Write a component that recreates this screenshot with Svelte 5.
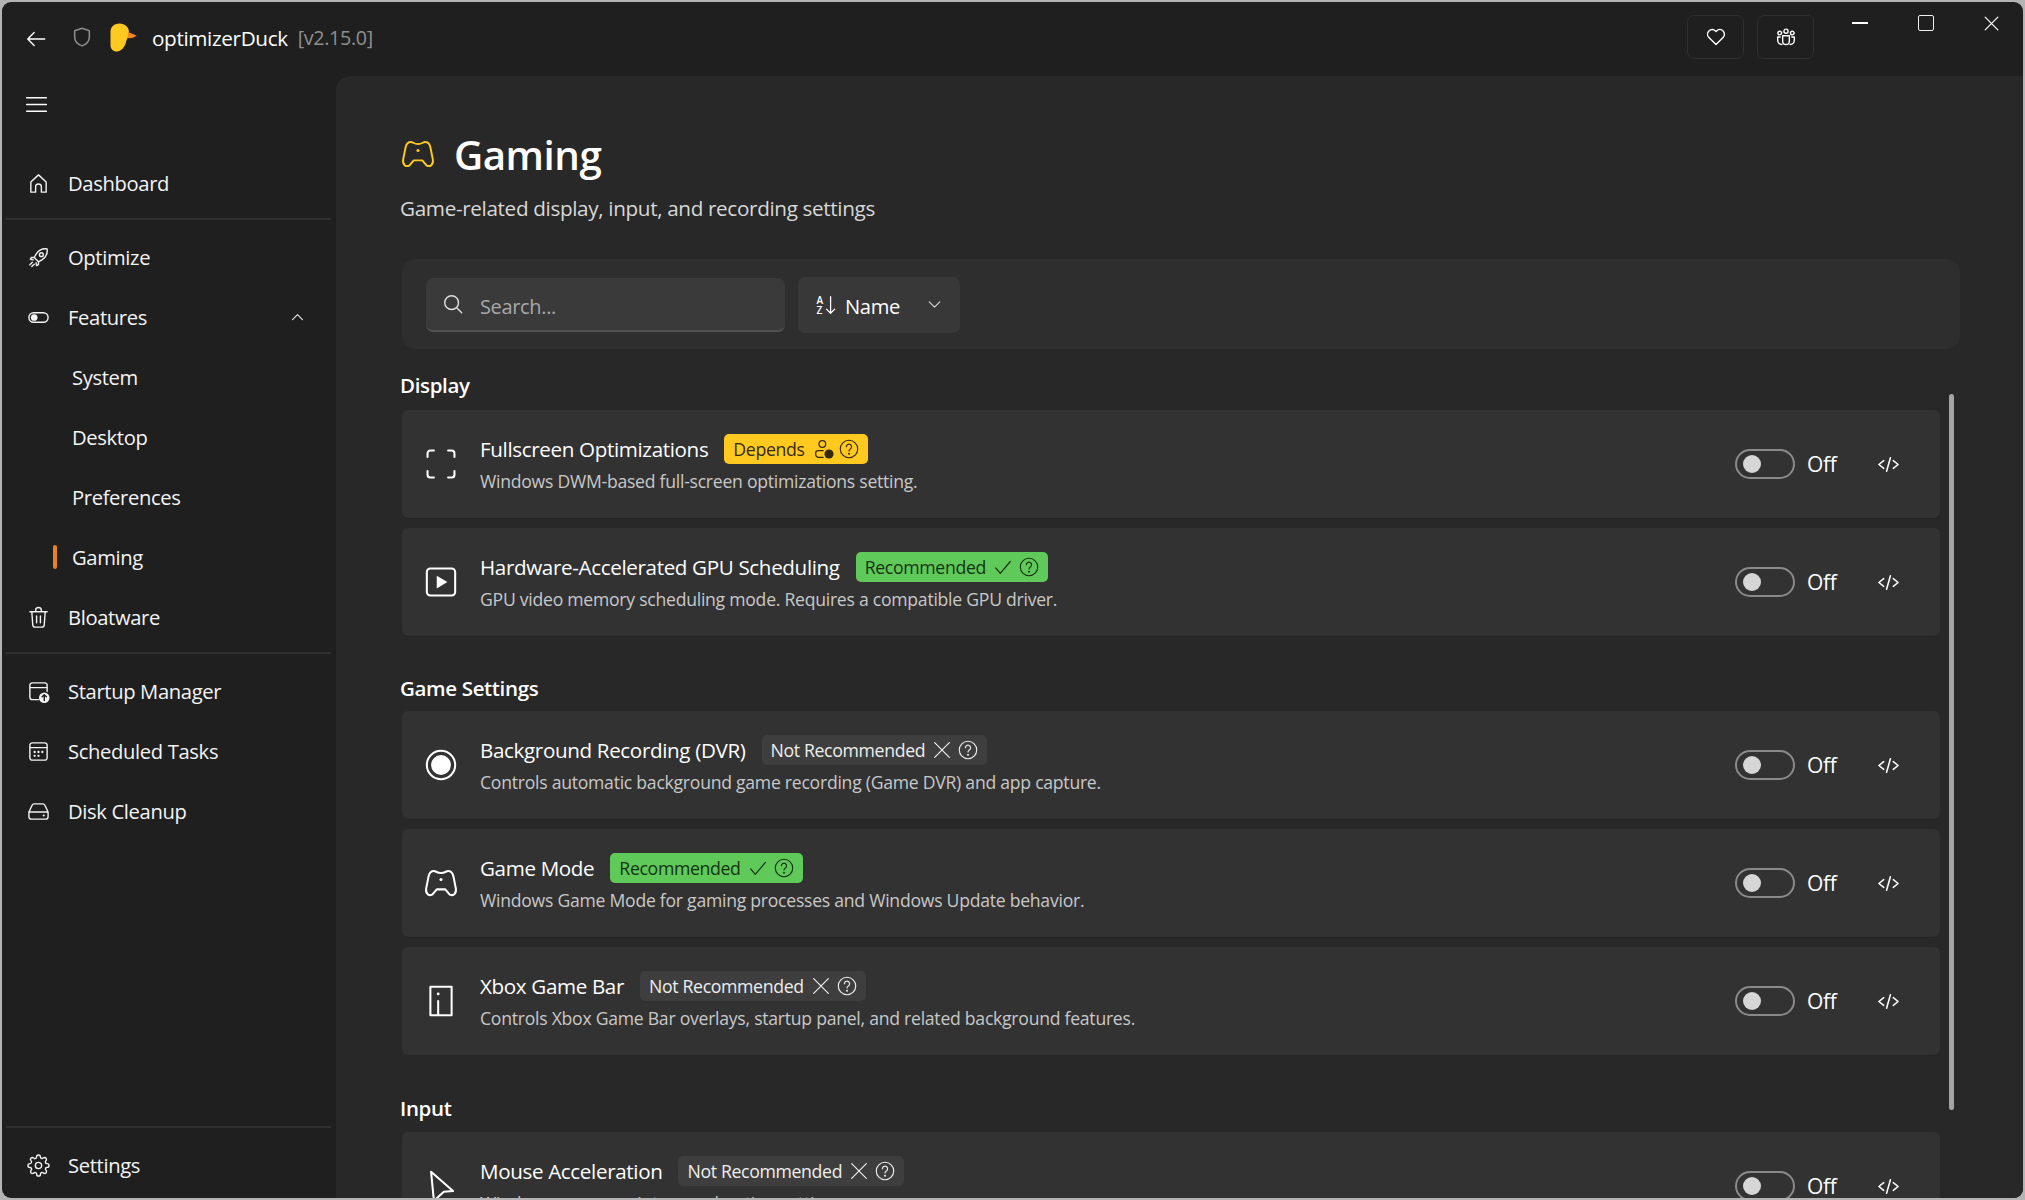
<script>
	const icons = {
		back: 'M21.500 12H3M10 5l-7 7 7 7',
		shield: 'M12 2.500l8 2.600v6.900c0 5-3.400 8-8 9.700-4.600-1.700-8-4.700-8-9.700V5.100z',
		menu: 'M2.500 5.500h19M2.500 12h19M2.500 18.500h19',
		home: 'M4 21V10.500L12 3l8 7.500V21h-5v-5.500a3 3 0 0 0-6 0V21z',
		rocket: 'M21 3c-5-.6-9 1.400-11.500 5.500L7.500 12l4.500 4.500 3.500-2C19.600 12 21.600 8 21 3zM15 7a2 2 0 1 1 0 4 2 2 0 0 1 0-4zM7.500 12H4.500l-1 2 3 .5M12 16.500V19.500l-2 1-.5-3M5.500 17L3 19.500M7.500 19L5 21.500',
		toggle: 'M7 7h10a5 5 0 0 1 0 10H7A5 5 0 0 1 7 7z',
		trash: 'M3 6h18M9 6V4.500A2.500 2.500 0 0 1 15 4.500V6M5 6l1 13.500A2.500 2.500 0 0 0 8.500 22h7a2.500 2.500 0 0 0 2.500-2.500L19 6M10 10.500v7M14 10.500v7',
		startup: 'M12 20.500H5.500A2.500 2.500 0 0 1 3 18V5.500A2.500 2.500 0 0 1 5.500 3h13A2.500 2.500 0 0 1 21 5.500V12M3 8h18',
		calendar: 'M5.500 3h13A2.500 2.500 0 0 1 21 5.500v13a2.500 2.500 0 0 1-2.500 2.500h-13A2.500 2.500 0 0 1 3 18.500v-13A2.500 2.500 0 0 1 5.500 3zM3 8h18',
		disk: 'M7.500 4h9c1 0 1.800.6 2.200 1.500L22 12.500v5a2.500 2.500 0 0 1-2.500 2.500h-15A2.500 2.500 0 0 1 2 17.500v-5l3.300-7C5.700 4.600 6.500 4 7.500 4zM2 12.500h20',
		gear: 'M19.400 15a1.650 1.650 0 0 0 .33 1.820l.06.06a2 2 0 1 1-2.830 2.830l-.06-.06a1.650 1.650 0 0 0-1.820-.33 1.650 1.650 0 0 0-1 1.510V21a2 2 0 1 1-4 0v-.09A1.650 1.650 0 0 0 9 19.400a1.650 1.650 0 0 0-1.820.33l-.06.06a2 2 0 1 1-2.830-2.830l.06-.06a1.650 1.650 0 0 0 .33-1.820 1.650 1.650 0 0 0-1.510-1H3a2 2 0 1 1 0-4h.09A1.650 1.650 0 0 0 4.600 9a1.650 1.650 0 0 0-.33-1.820l-.06-.06a2 2 0 1 1 2.830-2.830l.06.06a1.650 1.650 0 0 0 1.820.33H9a1.650 1.650 0 0 0 1-1.510V3a2 2 0 1 1 4 0v.09a1.650 1.650 0 0 0 1 1.510 1.650 1.650 0 0 0 1.820-.33l.06-.06a2 2 0 1 1 2.830 2.830l-.06.06a1.650 1.650 0 0 0-.33 1.820V9a1.650 1.650 0 0 0 1.510 1H21a2 2 0 1 1 0 4h-.09a1.650 1.650 0 0 0-1.510 1zM12 8.700a3.300 3.300 0 1 1 0 6.600 3.300 3.300 0 0 1 0-6.600z',
		gamepad: 'M7 3.500C5 3.500 3.800 5 3.300 7L1.500 16C1 19.500 3.500 21.500 6 20L9 16.500H15L18 20C20.500 21.500 23 19.500 22.500 16L20.700 7C20.200 5 19 3.500 17 3.500C15.500 3.500 15 5 12 5C9 5 8.500 3.500 7 3.500z',
		corners: 'M2.500 7V4.500a2 2 0 0 1 2-2H7M17 2.500h2.500a2 2 0 0 1 2 2V7M21.500 17v2.500a2 2 0 0 1-2 2H17M7 21.500H4.500a2 2 0 0 1-2-2V17',
		play: 'M4.500 2.500h15a2.500 2.500 0 0 1 2.500 2.500v14a2.500 2.500 0 0 1-2.500 2.500h-15A2.500 2.500 0 0 1 2 19V5a2.500 2.500 0 0 1 2.500-2.500z',
		circle: 'M12 2a10 10 0 1 1 0 20 10 10 0 0 1 0-20z',
		xbar: 'M4.500 2h15v20h-15zM10 22V12',
		cursor: 'M5 2L20.500 15.500L14 16L7 22.500z',
		chevUp: 'M5 15l7-7 7 7',
		chevDown: 'M6 9l6 6 6-6',
		search: 'M10.500 3a7.500 7.500 0 1 1 0 15 7.500 7.500 0 0 1 0-15zM16 16l5.500 5.500',
		code: 'M7 8l-5 4 5 4M17 8l5 4-5 4M14 5l-4 14',
		heart: 'M12 21L3.500 12.500a5.500 5.500 0 0 1 7.800-7.800l.7.7.7-.7a5.500 5.500 0 0 1 7.800 7.800z',
		team: 'M12 2.500a2.500 2.500 0 1 1 0 5 2.500 2.500 0 0 1 0-5zM4.500 5a2.200 2.200 0 1 1 0 4.400 2.200 2.200 0 0 1 0-4.400zM19.500 5a2.200 2.200 0 1 1 0 4.400 2.200 2.200 0 0 1 0-4.400zM8 10.500h8V17a4 4 0 0 1-8 0zM5 12H2v4a5 5 0 0 0 5 5M19 12h3v4a5 5 0 0 1-5 5',
		x: 'M4 4l16 16M20 4L4 20',
		check: 'M4 13l5 6L20 6',
		help: 'M12 2.500a9.500 9.500 0 1 1 0 19 9.500 9.500 0 0 1 0-19zM9.200 9.500a2.800 2.800 0 1 1 4.300 2.400c-.9.6-1.500 1.100-1.500 2.300'
	};

	const nav = [
		{ label: 'Dashboard', icon: 'home', divider: true },
		{ label: 'Optimize', icon: 'rocket' },
		{ label: 'Features', icon: 'toggle', open: true },
		{ label: 'System', sub: true },
		{ label: 'Desktop', sub: true },
		{ label: 'Preferences', sub: true },
		{ label: 'Gaming', sub: true, active: true },
		{ label: 'Bloatware', icon: 'trash', divider: true },
		{ label: 'Startup Manager', icon: 'startup' },
		{ label: 'Scheduled Tasks', icon: 'calendar' },
		{ label: 'Disk Cleanup', icon: 'disk' }
	];

	const sections = [
		{
			title: 'Display',
			rows: [
				{ name: 'Fullscreen Optimizations', desc: 'Windows DWM-based full-screen optimizations setting.', icon: 'corners', badge: 'Depends', kind: 'depends' },
				{ name: 'Hardware-Accelerated GPU Scheduling', desc: 'GPU video memory scheduling mode. Requires a compatible GPU driver.', icon: 'play', badge: 'Recommended', kind: 'good' }
			]
		},
		{
			title: 'Game Settings',
			rows: [
				{ name: 'Background Recording (DVR)', desc: 'Controls automatic background game recording (Game DVR) and app capture.', icon: 'circle', badge: 'Not Recommended', kind: 'bad' },
				{ name: 'Game Mode', desc: 'Windows Game Mode for gaming processes and Windows Update behavior.', icon: 'gamepad', badge: 'Recommended', kind: 'good' },
				{ name: 'Xbox Game Bar', desc: 'Controls Xbox Game Bar overlays, startup panel, and related background features.', icon: 'xbar', badge: 'Not Recommended', kind: 'bad' }
			]
		},
		{
			title: 'Input',
			rows: [
				{ name: 'Mouse Acceleration', desc: 'Windows mouse pointer acceleration setting.', icon: 'cursor', badge: 'Not Recommended', kind: 'bad' }
			]
		}
	];
</script>

{#snippet icon(name, cls = '')}
	<svg class="ic {cls}" viewBox="0 0 24 24" aria-hidden="true">
		<path d={icons[name]} />
		{#if name === 'toggle'}<circle class="dot" cx="7.500" cy="12" r="3.500" />{/if}
		{#if name === 'startup'}<circle class="dot" cx="18" cy="18.500" r="5.500" /><path class="cut" d="M18 21.500v-6M15.800 17.500l2.200-2.200 2.200 2.200" />{/if}
		{#if name === 'calendar'}
			<circle class="dot" cx="8" cy="12.500" r="1.200" /><circle class="dot" cx="12" cy="12.500" r="1.200" /><circle class="dot" cx="16" cy="12.500" r="1.200" />
			<circle class="dot" cx="8" cy="16.500" r="1.200" /><circle class="dot" cx="12" cy="16.500" r="1.200" />
		{/if}
		{#if name === 'disk'}<circle class="dot" cx="17.500" cy="16.200" r="1.100" />{/if}
		{#if name === 'gamepad'}<circle class="dot" cx="12" cy="9.500" r="1.100" />{/if}
		{#if name === 'play'}<path class="dot" d="M9 7.500v9l7.500-4.500z" />{/if}
		{#if name === 'circle'}<circle class="dot" cx="12" cy="12" r="7" />{/if}
		{#if name === 'xbar'}<circle class="dot" cx="10" cy="7" r="1" />{/if}
		{#if name === 'help'}<circle class="dot" cx="12" cy="17.300" r="1.100" />{/if}
	</svg>
{/snippet}

<div class="window">
	<header class="titlebar">
		{@render icon('back', 'back')}
		{@render icon('shield', 'shield')}
		<svg class="duck" viewBox="0 0 28 30" aria-hidden="true">
			<path fill="#ffc91f" d="M10.500 .5C16 .5 20 4 20 9.500C20 14 17.500 16 17 19C16 24 12 28.500 8 28.500C4 28.500 1.500 26 1.500 22V9C1.500 4 5 .5 10.500 .5z" />
			<path fill="#f08a1d" d="M19 9L27.500 12.500C26 14.500 22 15.500 18.500 15z" />
		</svg>
		<span class="appname">optimizerDuck</span>
		<span class="version">[v2.15.0]</span>
		<div class="spacer"></div>
		<button class="tbtn">{@render icon('heart')}</button>
		<button class="tbtn">{@render icon('team')}</button>
		<div class="winctl">
			<span class="min"></span>
			<span class="max"></span>
			{@render icon('x', 'close')}
		</div>
	</header>

	<div class="body">
		<aside class="sidebar">
			<div class="menu">{@render icon('menu')}</div>
			<nav class="nav">
				{#each nav as item}
					<div class="item" class:sub={item.sub} class:active={item.active}>
						{#if item.icon}{@render icon(item.icon)}{/if}
						<span>{item.label}</span>
						{#if item.open}{@render icon('chevUp', 'chev')}{/if}
					</div>
					{#if item.divider}<div class="divider"></div>{/if}
				{/each}
			</nav>
			<div class="bottom">
				<div class="divider"></div>
				<div class="item">{@render icon('gear')}<span>Settings</span></div>
			</div>
		</aside>

		<main class="main">
			<div class="pagehead">
				{@render icon('gamepad', 'pageicon')}
				<h1>Gaming</h1>
			</div>
			<p class="subtitle">Game-related display, input, and recording settings</p>

			<div class="toolbar">
				<div class="search">
					{@render icon('search')}
					<span>Search...</span>
				</div>
				<div class="sort">
					<svg class="ic sorticon" viewBox="0 0 24 24" aria-hidden="true">
						<text x="1.500" y="10.500" font-size="11">A</text>
						<text x="1.500" y="22" font-size="11">Z</text>
						<path d="M17 3v18M12.500 16.500L17 21l4.500-4.500" />
					</svg>
					<span class="sortname">Name</span>
					{@render icon('chevDown', 'sortchev')}
				</div>
			</div>

			{#each sections as section}
				<section class="section">
					<h2>{section.title}</h2>
					<div class="rows">
						{#each section.rows as row}
							<div class="card">
								{@render icon(row.icon, 'rowicon')}
								<div class="info">
									<div class="nameline">
										<span class="name">{row.name}</span>
										<span class="badge {row.kind}">
											<span>{row.badge}</span>
											{#if row.kind === 'depends'}
												<svg class="ic person" viewBox="0 0 24 24" aria-hidden="true">
													<circle cx="10" cy="6" r="4" />
													<path d="M11 22H6a4 4 0 0 1-4-4v-1a3 3 0 0 1 3-3h6" />
													<circle class="dot" cx="18" cy="18" r="5.500" />
												</svg>
											{:else if row.kind === 'good'}
												{@render icon('check', 'mark')}
											{:else}
												{@render icon('x', 'mark')}
											{/if}
											{@render icon('help', 'helpicon')}
										</span>
									</div>
									<div class="desc">{row.desc}</div>
								</div>
								<div class="switch"><span class="thumb"></span></div>
								<span class="off">Off</span>
								{@render icon('code', 'codeicon')}
							</div>
						{/each}
					</div>
				</section>
			{/each}
			<div class="scrollbar"></div>
		</main>
	</div>
</div>

<style>
	:global(body) {
		margin: 0;
		background: #b4b4b4;
		font-family: "Open Sans", "Noto Sans", sans-serif;
		color: #fff;
	}

	.window {
		width: 2021px;
		height: 1196px;
		margin: 2px;
		border-radius: 9px;
		background: #1f1f1f;
		overflow: hidden;
		display: flex;
		flex-direction: column;
		letter-spacing: -0.35px;
	}

	.ic {
		width: 20px;
		height: 20px;
		flex: none;
		fill: none;
		stroke: currentColor;
		stroke-width: 1.700;
		stroke-linecap: round;
		stroke-linejoin: round;
	}
	.ic .dot {
		fill: currentColor;
		stroke: none;
	}
	.ic .cut {
		stroke: #1f1f1f;
		stroke-width: 1.500;
	}

	/* title bar */
	.titlebar {
		height: 74px;
		flex: none;
		display: flex;
		align-items: center;
		padding-left: 23px;
		position: relative;
	}
	.back {
		width: 22px;
		height: 22px;
		stroke-width: 1.500;
	}
	.shield {
		width: 22px;
		height: 22px;
		margin-left: 24px;
		margin-top: -4px;
		color: #8c8c8c;
	}
	.duck {
		width: 28px;
		height: 30px;
		margin-left: 16px;
		margin-top: -2px;
	}
	.appname {
		margin-left: 15px;
		margin-top: -3px;
		font-size: 20.700px;
	}
	.version {
		margin-left: 10px;
		margin-top: -3px;
		font-size: 19.700px;
		color: #8f8f8f;
	}
	.spacer {
		flex: 1;
	}
	.tbtn {
		width: 57px;
		height: 44px;
		margin-top: -4px;
		margin-right: 13px;
		padding: 0;
		border: 1.500px solid #303030;
		border-radius: 7px;
		background: #1f1f1f;
		color: #fff;
		display: flex;
		align-items: center;
		justify-content: center;
	}
	.winctl {
		display: flex;
		align-items: center;
		width: 196px;
		height: 18px;
		margin-top: -32px;
		padding-left: 25px;
		box-sizing: border-box;
	}
	.min {
		width: 16px;
		height: 2px;
		background: #fff;
	}
	.max {
		width: 14px;
		height: 14px;
		margin-left: 50px;
		border: 1.500px solid #f0f0f0;
		border-radius: 2px;
	}
	.close {
		width: 19px;
		height: 19px;
		margin-left: 48px;
		stroke-width: 1.500;
	}

	/* sidebar */
	.body {
		flex: 1;
		display: flex;
		min-height: 0;
	}
	.sidebar {
		width: 334px;
		flex: none;
		display: flex;
		flex-direction: column;
		box-sizing: border-box;
	}
	.menu {
		height: 22px;
		padding: 16px 0 0 22px;
	}
	.menu .ic {
		width: 25px;
		height: 25px;
		stroke-width: 1.300;
	}
	.nav {
		margin-top: 39px;
	}
	.item {
		height: 60px;
		display: flex;
		align-items: center;
		padding-left: 25px;
		font-size: 20.200px;
		color: #f4f4f4;
		position: relative;
	}
	.item .ic {
		width: 23px;
		height: 23px;
		margin-right: 18px;
		stroke-width: 1.450;
	}
	.item.sub {
		padding-left: 70px;
	}
	.item.active::before {
		content: "";
		position: absolute;
		left: 51px;
		top: 18px;
		width: 4px;
		height: 24px;
		border-radius: 2px;
		background: #e8811f;
	}
	.item .chev {
		width: 17px;
		height: 17px;
		margin: 0;
		position: absolute;
		left: 287px;
	}
	.divider {
		height: 2px;
		margin: 5px 5px 7px 4px;
		background: #303030;
	}
	.bottom {
		margin-top: auto;
		padding-bottom: 3px;
	}

	/* main */
	.main {
		flex: 1;
		min-width: 0;
		background: #282828;
		border-top-left-radius: 14px;
		padding: 0 63px 0 64px;
		overflow: hidden;
		position: relative;
	}
	.pagehead {
		display: flex;
		align-items: center;
		margin: 48px 0 0 1px;
		height: 60px;
	}
	.pageicon {
		width: 34px;
		height: 34px;
		color: #ffc91f;
		stroke-width: 1.400;
	}
	h1 {
		margin: 0 0 0 19px;
		font-size: 40.300px;
		font-weight: 600;
		letter-spacing: -0.5px;
	}
	.subtitle {
		margin: 8px 0 0;
		font-size: 20.700px;
		color: #d8d8d8;
		line-height: 32px;
	}
	.toolbar {
		margin: 35px 0 0 2px;
		height: 90px;
		background: #2e2e2e;
		border-radius: 14px;
		box-sizing: border-box;
		padding: 19px 24px 17px;
		display: flex;
		gap: 13px;
		align-items: center;
	}
	.search {
		width: 359px;
		height: 54px;
		box-sizing: border-box;
		background: #3a3a3a;
		border-radius: 7px;
		border-bottom: 2px solid #525252;
		display: flex;
		align-items: center;
		padding-left: 16px;
		color: #a8a8a8;
		font-size: 20px;
	}
	.search span {
		margin-top: 4px;
	}
	.search .ic {
		width: 22px;
		height: 22px;
		margin-right: 16px;
		color: #e0e0e0;
		stroke-width: 1.500;
	}
	.sort {
		width: 162px;
		height: 56px;
		box-sizing: border-box;
		background: #383838;
		border-radius: 7px;
		display: flex;
		align-items: center;
		padding-left: 17px;
	}
	.sorticon {
		width: 22px;
		height: 22px;
		stroke-width: 1.400;
	}
	.sorticon text {
		fill: currentColor;
		stroke: none;
		font-family: "Open Sans", sans-serif;
		font-weight: 600;
	}
	.sortname {
		margin-left: 8px;
		font-size: 20.200px;
		margin-top: 1px;
	}
	.sortchev {
		width: 21px;
		height: 21px;
		margin-left: 24px;
		margin-top: -2px;
		color: #d8d8d8;
		stroke-width: 1.300;
	}

	.section {
		padding-right: 20px;
	}
	.section h2 {
		margin: 0;
		font-size: 20.500px;
		font-weight: 600;
		line-height: 28px;
		padding-top: 22px;
		padding-bottom: 11px;
	}
	.section + .section h2 {
		padding-top: 38px;
		padding-bottom: 9px;
	}
	.section:last-of-type h2 {
		padding-top: 39px;
		padding-bottom: 10px;
	}
	.rows {
		display: flex;
		flex-direction: column;
		gap: 10px;
		margin-left: 2px;
	}
	.card {
		height: 108px;
		box-sizing: border-box;
		background: #323232;
		border-radius: 6px;
		box-shadow: 0 1px 0 #242424;
		display: flex;
		align-items: center;
		padding-left: 22px;
		flex: none;
	}
	.rowicon {
		width: 34px;
		height: 34px;
		stroke-width: 1.450;
	}
	.info {
		flex: 1;
		margin-left: 22px;
		min-width: 0;
	}
	.nameline {
		display: flex;
		align-items: center;
		gap: 16px;
		height: 30px;
		margin-top: -1px;
	}
	.name {
		font-size: 20.600px;
	}
	.badge {
		height: 30px;
		display: inline-flex;
		align-items: center;
		padding: 0 8px 0 9px;
		border-radius: 5px;
		font-size: 17.700px;
		background: #3e3e3e;
		color: #eee;
	}
	.badge.depends {
		background: #ffc91f;
		color: #35290a;
	}
	.badge.good {
		background: #5fc95a;
		color: #14330f;
	}
	.mark {
		width: 22px;
		height: 22px;
		margin-left: 6px;
		stroke-width: 1.300;
	}
	.person {
		width: 20px;
		height: 20px;
		margin-left: 9px;
		stroke-width: 1.500;
	}
	.helpicon {
		width: 22px;
		height: 22px;
		margin-left: 4px;
		stroke-width: 1.250;
	}
	.desc {
		margin-top: 4px;
		font-size: 17.600px;
		letter-spacing: -0.25px;
		color: #c8c8c8;
		line-height: 26px;
	}
	.switch {
		width: 60px;
		height: 30px;
		box-sizing: border-box;
		border: 2px solid #8a8a8a;
		border-radius: 15px;
		display: flex;
		align-items: center;
		padding-left: 6px;
		flex: none;
	}
	.thumb {
		width: 18px;
		height: 18px;
		border-radius: 50%;
		background: #d6d6d6;
	}
	.off {
		width: 29px;
		margin-left: 12px;
		font-size: 21px;
	}
	.codeicon {
		width: 23px;
		height: 23px;
		margin: 0 40px 0 41px;
		stroke-width: 1.600;
	}
	.scrollbar {
		position: absolute;
		left: 1613px;
		top: 318px;
		width: 5px;
		height: 716px;
		border-radius: 3px;
		background: #a4a4a4;
	}
</style>
